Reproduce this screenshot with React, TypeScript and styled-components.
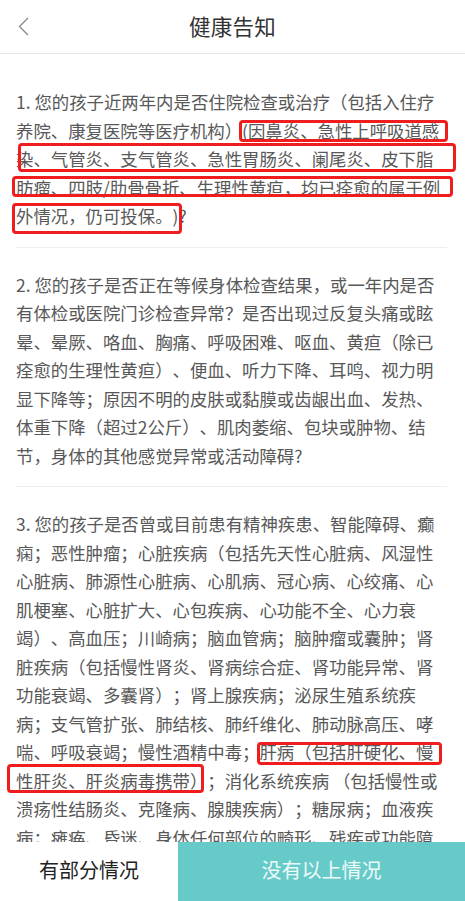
import { FC } from 'react';
import styled, { createGlobalStyle } from 'styled-components';

const GlobalStyle = createGlobalStyle`
  html, body {
    margin: 0;
    padding: 0;
    background: #ffffff;
  }
  body {
    font-family: 'Noto Sans CJK SC', 'Noto Sans', sans-serif;
  }
`;

const Page = styled.div`
  width: 465px;
  height: 100vh;
  display: flex;
  flex-direction: column;
  overflow: hidden;
  background: #ffffff;
`;

const Header = styled.header`
  box-sizing: border-box;
  height: 54px;
  flex: none;
  display: flex;
  align-items: center;
  justify-content: center;
  position: relative;
  border-bottom: 1px solid #e6e6e6;
`;

const BackButton = styled.button`
  position: absolute;
  left: 12px;
  top: 12px;
  width: 24px;
  height: 30px;
  padding: 0;
  border: none;
  background: none;
  cursor: pointer;
`;

const Title = styled.h1`
  margin: 0 0 2px;
  font-size: 21.5px;
  font-weight: 400;
  color: #333333;
  letter-spacing: 0.3px;
`;

const Content = styled.main`
  flex: 1;
  overflow: hidden;
  padding-top: 11px;
`;

const Question = styled.section<{ $last?: boolean }>`
  position: relative;
  margin: 0 18px 0 16px;
  padding: 23px 0 16px;
  border-bottom: ${(p) => (p.$last ? 'none' : '1px solid #eeeeee')};
  font-size: 17.4px;
  line-height: 28.5px;
  color: #585858;
  text-spacing-trim: space-all;
  p {
    margin: 0;
  }
`;

const Mark = styled.span<{ $l: number; $t: number; $w: number; $h: number }>`
  position: absolute;
  box-sizing: border-box;
  left: ${(p) => p.$l}px;
  top: ${(p) => p.$t}px;
  width: ${(p) => p.$w}px;
  height: ${(p) => p.$h}px;
  border: 3px solid #ef1d1d;
  border-radius: 4px;
  pointer-events: none;
`;

const Footer = styled.footer`
  height: 59px;
  flex: none;
  display: flex;
  background: #ffffff;
`;

const PartButton = styled.button`
  width: 178px;
  border: none;
  background: #ffffff;
  color: #222222;
  font-family: inherit;
  font-size: 20px;
  padding: 0 0 4px;
  cursor: pointer;
`;

const NoneButton = styled.button`
  flex: 1;
  border: none;
  background: #66cbc8;
  color: #eefafa;
  font-family: inherit;
  font-size: 20px;
  padding: 0 0 4px;
  cursor: pointer;
`;

const q1 =
  '1. 您的孩子近两年内是否住院检查或治疗（包括入住疗养院、康复医院等医疗机构）(因鼻炎、急性上呼吸道感染、气管炎、支气管炎、急性胃肠炎、阑尾炎、皮下脂肪瘤、四肢/肋骨骨折、生理性黄疸，均已痊愈的属于例外情况，仍可投保。)?';

const q2 =
  '2. 您的孩子是否正在等候身体检查结果，或一年内是否有体检或医院门诊检查异常？是否出现过反复头痛或眩晕、晕厥、咯血、胸痛、呼吸困难、呕血、黄疸（除已痊愈的生理性黄疸）、便血、听力下降、耳鸣、视力明显下降等；原因不明的皮肤或黏膜或齿龈出血、发热、体重下降（超过2公斤）、肌肉萎缩、包块或肿物、结节，身体的其他感觉异常或活动障碍?';

const q3 =
  '3. 您的孩子是否曾或目前患有精神疾患、智能障碍、癫痫；恶性肿瘤；心脏疾病（包括先天性心脏病、风湿性心脏病、肺源性心脏病、心肌病、冠心病、心绞痛、心肌梗塞、心脏扩大、心包疾病、心功能不全、心力衰竭）、高血压；川崎病；脑血管病；脑肿瘤或囊肿；肾脏疾病（包括慢性肾炎、肾病综合症、肾功能异常、肾功能衰竭、多囊肾）；肾上腺疾病；泌尿生殖系统疾病；支气管扩张、肺结核、肺纤维化、肺动脉高压、哮喘、呼吸衰竭；慢性酒精中毒；肝病（包括肝硬化、慢性肝炎、肝炎病毒携带）；消化系统疾病 （包括慢性或溃疡性结肠炎、克隆病、腺胰疾病）；糖尿病；血液疾病；瘫痪、昏迷、身体任何部位的畸形、残疾或功能障碍？';

const App: FC = () => (
  <>
    <GlobalStyle />
    <Page>
      <Header>
        <BackButton aria-label="返回">
          <svg width="24" height="30" viewBox="0 0 24 30">
            <polyline
              points="16,6 7.5,14.5 16,23"
              fill="none"
              stroke="#8a8a8a"
              strokeWidth="1.4"
            />
          </svg>
        </BackButton>
        <Title>健康告知</Title>
      </Header>
      <Content>
        <Question>
          <p>{q1}</p>
          <Mark $l={223} $t={55} $w={209} $h={22} />
          <Mark $l={2} $t={78} $w={438} $h={29} />
          <Mark $l={-4} $t={111} $w={441} $h={21} />
          <Mark $l={-4} $t={138} $w={170} $h={31} />
        </Question>
        <Question>
          <p>{q2}</p>
        </Question>
        <Question $last>
          <p>{q3}</p>
          <Mark $l={241} $t={255} $w={185} $h={23} />
          <Mark $l={-9} $t={277} $w={197} $h={29} />
        </Question>
      </Content>
      <Footer>
        <PartButton>有部分情况</PartButton>
        <NoneButton>没有以上情况</NoneButton>
      </Footer>
    </Page>
  </>
);

export default App;
